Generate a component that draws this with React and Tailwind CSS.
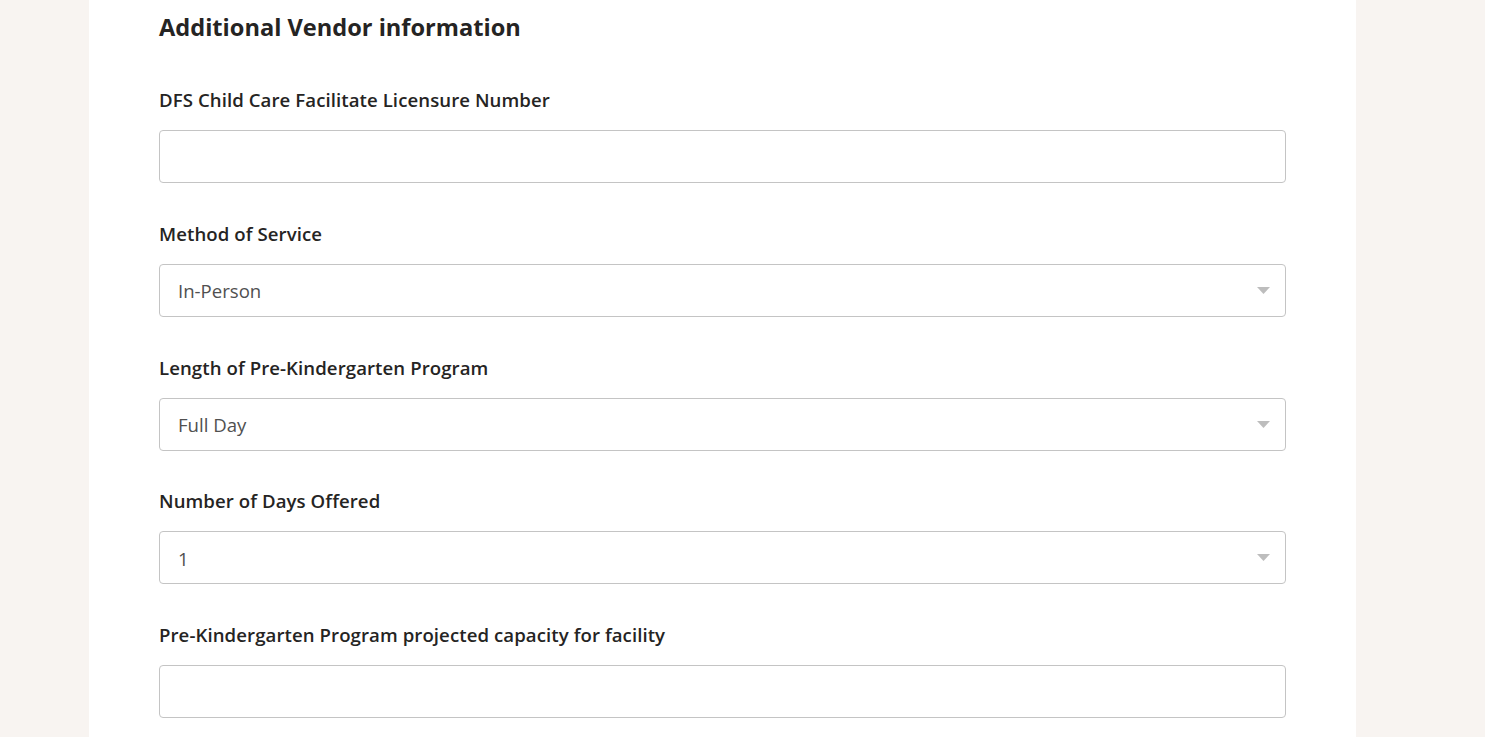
import React from "react";

function Label({ children }) {
  return (
    <div className="text-[18.6px] leading-[24px] font-semibold text-[#252423] h-[24px] whitespace-nowrap tracking-[0.08px]">{children}</div>
  );
}

function TextInput() {
  return <div className="mt-[18px] h-[53px] w-full rounded-[4px] border border-[#c4c4c4] bg-white" />;
}

function Select({ value }) {
  return (
    <div className="mt-[18px] h-[53px] w-full rounded-[4px] border border-[#c4c4c4] bg-white flex items-center justify-between pl-[18px] pr-[15px]">
      <span className="text-[18.6px] text-[#505050] font-normal pt-[2px]">{value}</span>
      <svg width="13" height="7" viewBox="0 0 13 7">
        <polygon points="0,0 13,0 6.5,7" fill="#bdbdbd" />
      </svg>
    </div>
  );
}

export default function App() {
  return (
    <div
      className="min-h-[737px] h-[737px] overflow-hidden bg-[#f8f4f1] flex"
      style={{ fontFamily: '"Open Sans", "Noto Sans", sans-serif' }}
    >
      <div className="ml-[89px] w-[1267px] bg-white px-[70px] pt-[9px]">
        <h1 className="text-[23.6px] leading-[36px] font-bold text-[#252423]">
          Additional Vendor information
        </h1>
        <div className="mt-[43px] flex flex-col gap-[38.75px]">
          <div>
            <Label>DFS Child Care Facilitate Licensure Number</Label>
            <TextInput />
          </div>
          <div>
            <Label>Method of Service</Label>
            <Select value="In-Person" />
          </div>
          <div>
            <Label>Length of Pre-Kindergarten Program</Label>
            <Select value="Full Day" />
          </div>
          <div>
            <Label>Number of Days Offered</Label>
            <Select value="1" />
          </div>
          <div>
            <Label>Pre-Kindergarten Program projected capacity for facility</Label>
            <TextInput />
          </div>
        </div>
      </div>
    </div>
  );
}
